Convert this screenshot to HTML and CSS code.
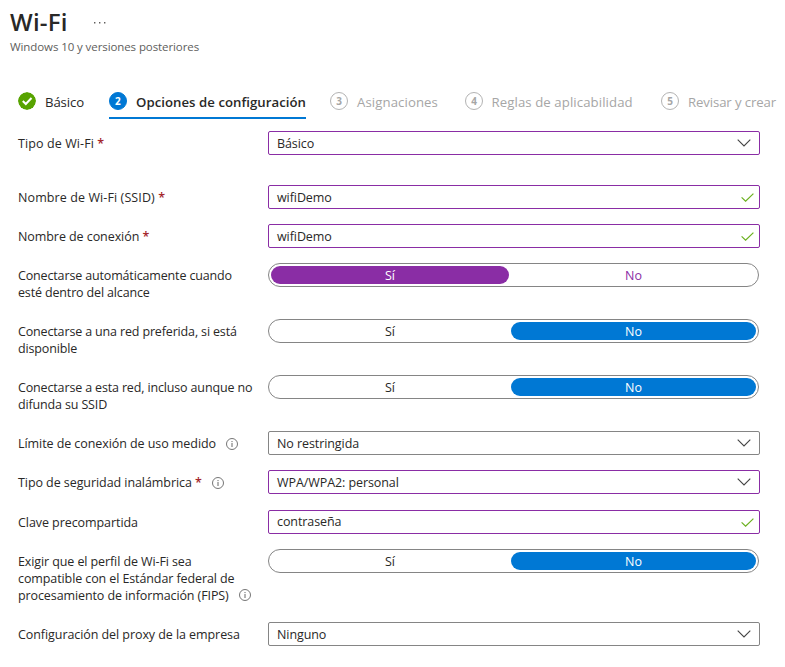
FILE: index.html
```html
<!DOCTYPE html>
<html lang="es">
<head>
<meta charset="utf-8">
<title>Wi-Fi</title>
<link rel="stylesheet" href="styles.css">
</head>
<body>
<svg width="0" height="0" class="defs">
  <symbol id="chevron" viewBox="0 0 14 8"><path d="M.7.7 7 7 13.3.7" fill="none" stroke="#444" stroke-width="1.1"/></symbol>
  <symbol id="tick" viewBox="0 0 13 9"><path d="M.6 4.4 4.6 8.2 12.4.6" fill="none" stroke="#6bb01f" stroke-width="1.2"/></symbol>
  <symbol id="info" viewBox="0 0 12 12"><circle cx="6" cy="6" r="5.5" fill="none" stroke="#666" stroke-width=".9"/><path d="M6 5v4M6 3v1.1" stroke="#666" stroke-width="1"/></symbol>
</svg>
<header class="header">
  <div class="title-line"><h1 class="title">Wi-Fi</h1><svg class="more" viewBox="0 0 12 2"><path d="M0 0h1.4v1.4H0zM5 0h1.4v1.4H5zM10 0h1.4v1.4H10z" fill="#605e5c"/></svg></div>
  <p class="subtitle">Windows 10 y versiones posteriores</p>
</header>
<nav class="steps">
  <div class="step done"><svg class="badge" viewBox="0 0 18 18"><circle cx="9" cy="9" r="9" fill="#57a300"/><path d="m4.8 9 3 3 5.7-6" fill="none" stroke="#fff" stroke-width="2"/></svg><span class="step-text">Básico</span></div>
  <div class="step active"><span class="badge">2</span><span class="step-text">Opciones de configuración</span></div>
  <div class="step pending"><span class="badge">3</span><span class="step-text">Asignaciones</span></div>
  <div class="step pending rules"><span class="badge">4</span><span class="step-text">Reglas de aplicabilidad</span></div>
  <div class="step review"><span class="badge">5</span><span class="step-text">Revisar y crear</span></div>
</nav>
<main class="form">
  <div class="row first"><div class="label loose">Tipo de Wi-Fi <b class="req">*</b></div><div class="field edited"><span>Básico</span><svg class="chevron"><use href="#chevron"/></svg></div></div>
  <div class="row"><div class="label loose">Nombre de Wi-Fi (SSID) <b class="req">*</b></div><div class="field edited"><span>wifiDemo</span><svg class="tick"><use href="#tick"/></svg></div></div>
  <div class="row"><div class="label">Nombre de conexión <b class="req">*</b></div><div class="field edited"><span>wifiDemo</span><svg class="tick"><use href="#tick"/></svg></div></div>
  <div class="row"><div class="label tight">Conectarse automáticamente cuando<br>esté dentro del alcance</div><div class="toggle edited"><span class="option on">Sí</span><span class="option">No</span></div></div>
  <div class="row"><div class="label tight">Conectarse a una red preferida, si está<br>disponible</div><div class="toggle"><span class="option">Sí</span><span class="option on">No</span></div></div>
  <div class="row"><div class="label tight">Conectarse a esta red, incluso aunque no<br>difunda su SSID</div><div class="toggle"><span class="option">Sí</span><span class="option on">No</span></div></div>
  <div class="row"><div class="label">Límite de conexión de uso medido<svg class="info"><use href="#info"/></svg></div><div class="field"><span>No restringida</span><svg class="chevron"><use href="#chevron"/></svg></div></div>
  <div class="row security"><div class="label">Tipo de seguridad inalámbrica <b class="req">*</b><svg class="info"><use href="#info"/></svg></div><div class="field edited"><span>WPA/WPA2: personal</span><svg class="chevron"><use href="#chevron"/></svg></div></div>
  <div class="row"><div class="label">Clave precompartida</div><div class="field edited password"><span>contraseña</span><svg class="tick"><use href="#tick"/></svg></div></div>
  <div class="row"><div class="label fips">Exigir que el perfil de Wi-Fi sea<br>compatible con el Estándar federal de<br>procesamiento de información (FIPS)<svg class="info"><use href="#info"/></svg></div><div class="toggle"><span class="option">Sí</span><span class="option on">No</span></div></div>
  <div class="row"><div class="label">Configuración del proxy de la empresa</div><div class="field"><span>Ninguno</span><svg class="chevron"><use href="#chevron"/></svg></div></div>
</main>
</body>
</html>
```
FILE: styles.css
```css
* { box-sizing: border-box; }
body {
  margin: 0;
  background: #fff;
  color: #292827;
  font: 12.5px/17px "Open Sans", "Noto Sans", sans-serif;
  overflow: hidden;
}
.defs { display: block; }
.header { padding: 6px 10px 0; height: 91px; }
.title-line { display: flex; align-items: center; height: 32px; gap: 26px; }
.title { margin: 0; font-size: 24px; font-weight: 600; line-height: 32px; letter-spacing: .2px; }
.more { width: 12px; height: 2px; margin-top: 2px; }
.subtitle { margin: 0; font-size: 11.5px; line-height: 17px; color: #605e5c; letter-spacing: -.09px; }
.steps {
  display: grid;
  grid-template-columns: 91px 221px 135px 196px 115px;
  padding-left: 18px;
  height: 40px;
}
.step {
  display: flex;
  align-items: flex-start;
  gap: 9px;
  height: 28px;
  color: #a6a6a6;
  font-size: 13.2px;
  line-height: 22px;
  white-space: nowrap;
}
.done .step-text, .review .step-text { letter-spacing: -.12px; }
.pending .step-text { letter-spacing: .09px; }
.rules { gap: 8.5px; }
.badge {
  flex: none;
  width: 18px;
  height: 18px;
  border: 1px solid #b3b3b3;
  border-radius: 50%;
  text-align: center;
  font-size: 10px;
  font-weight: 700;
  line-height: 16px;
  margin-top: 1px;
}
svg.badge { border: 0; }
.done { color: #292827; }
.active { width: 197px; border-bottom: 2px solid #0078d4; color: #292827; font-weight: 600; letter-spacing: .04px; }
.active .badge { background: #0078d4; border-color: #0078d4; color: #fff; }
.form { padding-left: 18px; }
.row { display: grid; grid-template-columns: 250px 492px; align-items: start; margin-bottom: 15px; }
.first { margin-bottom: 30px; }
.security { margin-bottom: 16px; }
.label { padding: 4px 0 3px; white-space: nowrap; letter-spacing: -.07px; }
.loose { letter-spacing: .1px; }
.tight { letter-spacing: -.15px; }
.fips { letter-spacing: -.1px; }
.req { color: #a4262c; font-weight: 600; }
.info { width: 12px; height: 12px; margin-left: 10px; vertical-align: -2px; }
.fips .info { vertical-align: -1px; }
.field {
  display: flex;
  align-items: center;
  justify-content: space-between;
  height: 24px;
  padding: 0 8px;
  border: 1px solid #858585;
  border-radius: 2px;
  letter-spacing: -.08px;
}
.field.edited { border-color: #8a2da5; }
.field .chevron { width: 14px; height: 8px; }
.field .tick { width: 13px; height: 9px; margin-right: -3px; }
.password span { margin-top: -2px; }
.toggle {
  display: grid;
  grid-template-columns: 238px 245px;
  gap: 2px;
  width: 491px;
  height: 24px;
  padding: 2px;
  border: 1px solid #858585;
  border-radius: 12px;
}
.option { height: 18px; border-radius: 9px; text-align: center; line-height: 19px; }
.option.on { background: #0078d4; color: #fff; }
.toggle.edited .option { color: #8a2da5; }
.toggle.edited .on { background: #8a2da5; color: #fff; }
```
